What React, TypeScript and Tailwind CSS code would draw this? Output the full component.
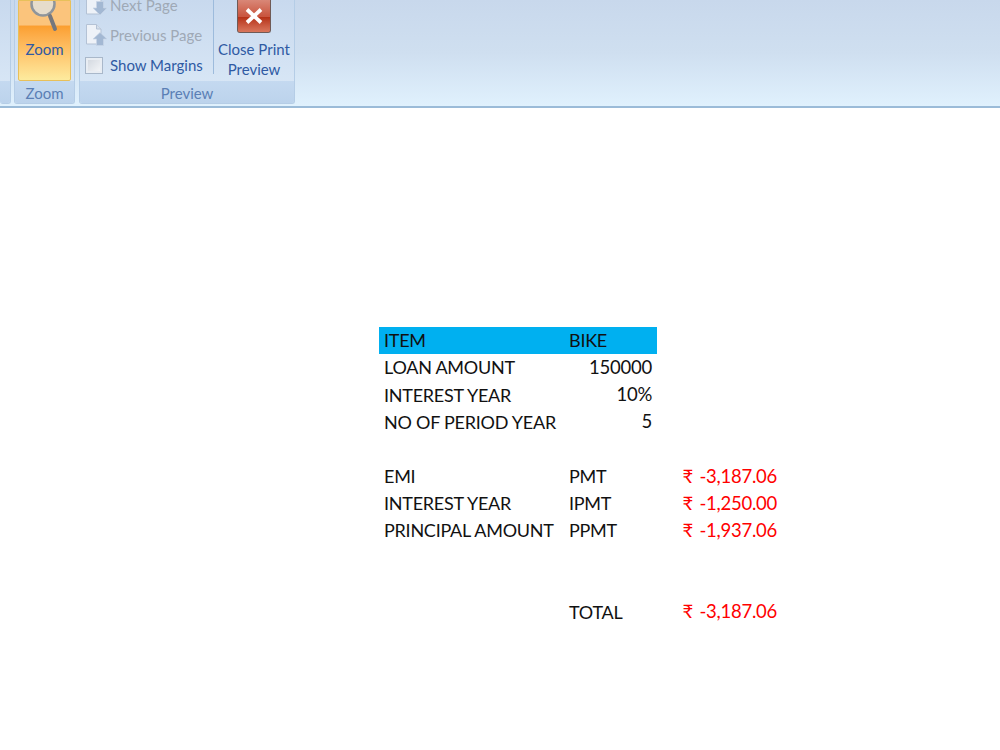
import React from "react";

const F = "font-['Lato','Carlito','Liberation_Sans',sans-serif]";

function Group({ className, label, children }: { className: string; label: string; children?: React.ReactNode }) {
  return (
    <div className={`flex flex-col h-[104px] border-x border-b border-[#b5cde6] rounded-b-[3px] bg-gradient-to-b from-[#c8d9ee] to-[#dbe9f7] overflow-hidden ${className}`}>
      <div className="flex-1 min-h-0 flex items-end overflow-hidden">{children}</div>
      <div className="h-[22px] shrink-0 bg-gradient-to-b from-[#c4d9f0] to-[#bcd3ec] text-center text-[#5a7fb5] text-[15px] leading-[24px]">{label}</div>
    </div>
  );
}

function PageIcon({ up }: { up?: boolean }) {
  return (
    <svg width="23" height="24" viewBox="0 0 23 24" className="shrink-0">
      <path d="M1.500 1.500h10l4.500 4.500v15H1.500z" fill="#eef2f8" stroke="#b4c2d5" />
      <path d="M11.500 1.500v4.500H16" fill="#d6dfeb" stroke="#b4c2d5" />
      {up ? (
        <path d="M15 9.500l7 6.500h-3.500v6.500h-7V16H8z" fill="#a3b8d3" stroke="#c8d5e6" strokeWidth="0.7" />
      ) : (
        <path d="M11.500 8.500h7V15H22l-7 7-7-7h3.500z" fill="#a3b8d3" stroke="#c8d5e6" strokeWidth="0.7" />
      )}
    </svg>
  );
}

function Row({ a, b, c, blue }: { a?: string; b?: string; c?: string; blue?: boolean }) {
  return (
    <div className={`grid grid-cols-[190px_88px_125px] h-[27.15px] pb-[1px] items-center text-[18px] leading-none text-[#111] tracking-[-0.25px] ${blue ? "bg-[#00b0f0] w-[278px]" : ""}`}>
      <div className="pl-[5px] whitespace-nowrap">{a}</div>
      {/^\d/.test(b ?? "") ? <div className="text-right pr-[5px] text-[18.5px]">{b}</div> : <div className="whitespace-nowrap">{b}</div>}
      {c ? <div className="text-right pr-[5px] text-[18.5px] text-[#ff0000] whitespace-nowrap [word-spacing:2px]">{c}</div> : <div />}
    </div>
  );
}

export default function App() {
  return (
    <div className={`w-[1000px] h-[750px] bg-white overflow-hidden ${F}`}>
      <header className="h-[108px] border-b-2 border-[#9bbbd8] bg-gradient-to-b from-[#c8d8ec] via-[#cfdff0] to-[#e0f1fd] flex gap-[3px] items-start">
        <Group className="w-[11px] border-l-0" label="" />
        <Group className="w-[61px]" label="Zoom">
          <div className="w-full h-full px-[3px] flex">
            <div className="relative w-full h-full rounded-b-[2px] border border-[#e8c05a] bg-gradient-to-b from-[#fbc47c] from-[30%] via-[#fb9f30] via-[32%] to-[#fdeb9e] overflow-hidden flex items-end justify-center pb-[23px]">
              <svg width="36" height="36" viewBox="0 0 36 36" className="absolute left-[7px] top-0">
                <circle cx="17" cy="3" r="11.500" fill="#e6dccb" stroke="#8f959b" strokeWidth="2.500" />
                <path d="M24 15l5 13" stroke="#75777d" strokeWidth="4" strokeLinecap="round" />
              </svg>
              <span className="text-[15px] leading-none text-[#2f5aa3]">Zoom</span>
            </div>
          </div>
        </Group>
        <Group className="w-[216px] ml-[1px]" label="Preview">
          <div className="w-full h-full flex">
            <div className="w-[133px] flex flex-col justify-end pb-[5px] pl-[5px] gap-[8px] shrink-0">
              <div className="flex items-center gap-[2px] h-[22px] text-[15px] text-[#9fa9b6]"><PageIcon /><span className="whitespace-nowrap">Next Page</span></div>
              <div className="flex items-center gap-[2px] h-[22px] text-[15px] text-[#9fa9b6]"><PageIcon up /><span className="whitespace-nowrap">Previous Page</span></div>
              <div className="flex items-center gap-[7px] h-[22px] text-[15px] text-[#2f5aa3]">
                <span className="w-[18px] h-[17px] border border-[#a9b8ca] bg-gradient-to-br from-[#cfd5dd] to-[#f7f8fa] shrink-0 shadow-[inset_0_0_0_2px_#e8edf3]" />
                <span className="whitespace-nowrap">Show Margins</span>
              </div>
            </div>
            <div className="w-px h-[74px] bg-[#9dbbdc] self-start" />
            <div className="flex-1 flex flex-col items-center text-[15px] leading-[19.500px] text-[#2f5aa3]">
              <div className="h-[33px] w-[34px] border border-[#6f5a56] border-t-0 rounded-b-[3px] bg-gradient-to-b from-[#d98777] via-[#c9553f] via-50% to-[#d2654a] flex items-center justify-center relative overflow-hidden">
                <div className="absolute inset-x-0 top-[17px] bottom-0 bg-gradient-to-b from-[#b52f14] to-[#d9765c]" />
                <svg width="20" height="16" viewBox="0 0 20 16" className="relative"><path d="M3 1.500l14 13M17 1.500l-14 13" stroke="#fff" strokeWidth="3.800" /></svg>
              </div>
              <div className="mt-[7px] whitespace-nowrap">Close Print</div>
              <div>Preview</div>
            </div>
          </div>
        </Group>
      </header>
      <main className="pt-[219.2px] pl-[379px]">
        <Row a="ITEM" b="BIKE" blue />
        <Row a="LOAN AMOUNT" b="150000" />
        <Row a="INTEREST YEAR" b="10%" />
        <Row a="NO OF PERIOD YEAR" b="5" />
        <Row />
        <Row a="EMI" b="PMT" c="₹ -3,187.06" />
        <Row a="INTEREST YEAR" b="IPMT" c="₹ -1,250.00" />
        <Row a="PRINCIPAL AMOUNT" b="PPMT" c="₹ -1,937.06" />
        <Row />
        <Row />
        <Row b="TOTAL" c="₹ -3,187.06" />
      </main>
    </div>
  );
}
